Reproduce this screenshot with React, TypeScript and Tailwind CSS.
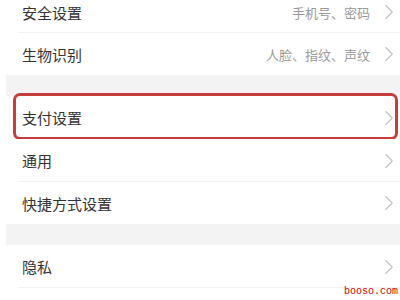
import { ChevronRight } from "lucide-react";

interface Row {
  label: string;
  value?: string;
  highlight?: boolean;
  h: string;
}

const groups: Row[][] = [
  [
    { label: "安全设置", value: "手机号、密码", h: "h-[42px]" },
    { label: "生物识别", value: "人脸、指纹、声纹", h: "h-[42px]" },
  ],
  [
    { label: "支付设置", highlight: true, h: "h-[43px]" },
    { label: "通用", h: "h-[43px]" },
    { label: "快捷方式设置", h: "h-[42px]" },
  ],
  [
    { label: "隐私", h: "h-[43px]" },
    { label: "", h: "h-[43px]" },
  ],
];

const font = { fontFamily: '"Noto Sans CJK SC", "Noto Sans", sans-serif' };

function SettingRow({ row, last }: { row: Row; last: boolean }) {
  return (
    <div className={`relative ${row.h} flex items-center pl-[22px] pr-[10px] bg-white`}>
      <span className="text-[15px] text-[#333] leading-none">{row.label}</span>
      <div className="ml-auto flex items-center gap-[6px]">
        {row.value && (
          <span className="text-[13px] text-[#9a9a9a] leading-none">{row.value}</span>
        )}
        {row.label && (
          <ChevronRight
            className="h-[26px] w-[26px] -mr-[12px] text-[#c2c2c2]"
            strokeWidth={1}
          />
        )}
      </div>
      {!last && (
        <div className="absolute left-[18px] right-0 bottom-0 h-px bg-[#f2f2f2]" />
      )}
      {row.highlight && (
        <div className="absolute left-[13px] right-[2px] top-[-3px] bottom-[-1px] border-[3px] border-[#c63d3d] rounded-[7px]" />
      )}
    </div>
  );
}

export default function App() {
  return (
    <div className="relative w-[400px] h-[300px] overflow-hidden bg-white" style={font}>
      <div className="flex flex-col -mt-[9px]">
        {groups.map((g, gi) => (
          <div key={gi} className="flex flex-col">
            {gi > 0 && <div className="h-[21px] ml-[6px] bg-[#f3f3f3]" />}
            {g.map((row, ri) => (
              <SettingRow key={ri} row={row} last={ri === g.length - 1 && gi !== groups.length - 1} />
            ))}
          </div>
        ))}
      </div>
      <span
        className="absolute right-[2px] bottom-[3px] text-[10px] leading-none text-[#d40000]"
        style={{ fontFamily: '"Liberation Mono", monospace' }}
      >
        booso.com
      </span>
    </div>
  );
}
